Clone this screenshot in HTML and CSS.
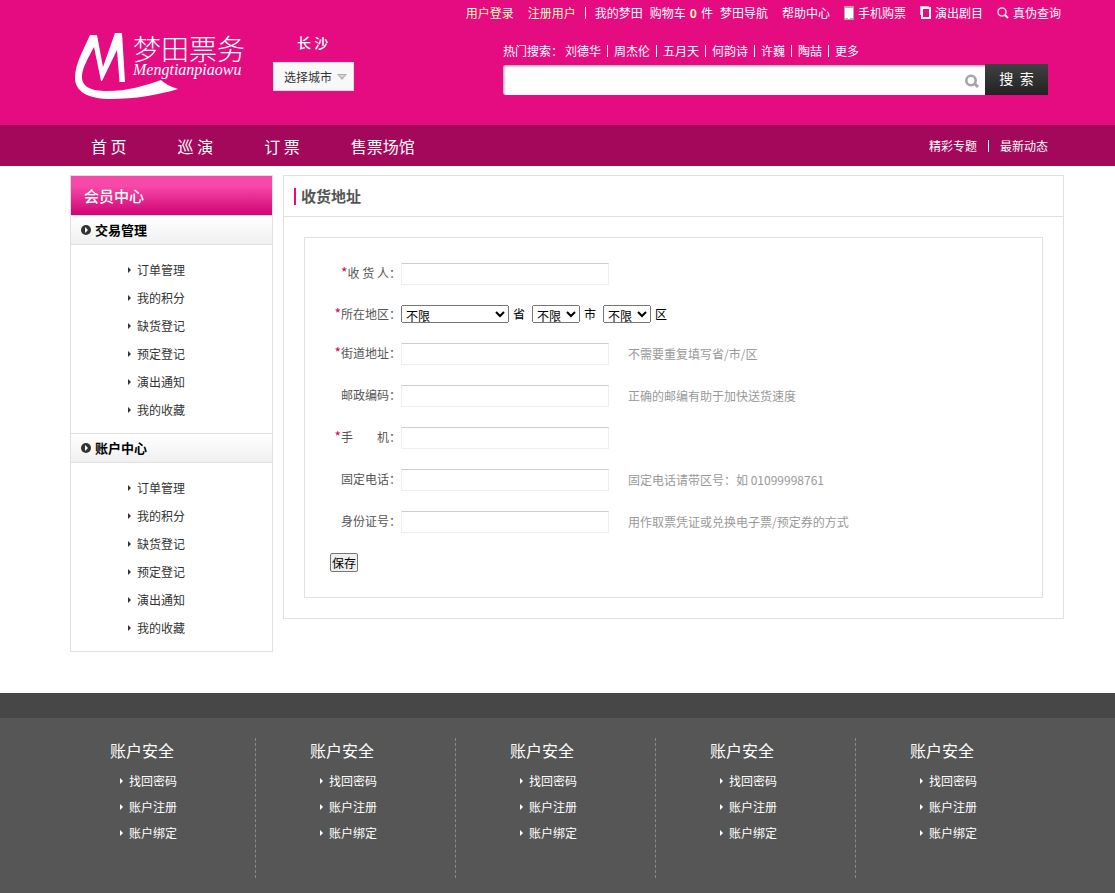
FILE: index.html
```html
<!DOCTYPE html>
<html lang="zh-CN">
<head>
<meta charset="utf-8">
<title>梦田票务 - 收货地址</title>
<link rel="stylesheet" href="styles.css">
</head>
<body>
<header class="header">
  <nav class="topnav">
    <a class="login" href="#">用户登录</a>
    <a class="login" href="#">注册用户</a>
    <i class="bar"></i>
    <a class="after-bar" href="#">我的梦田</a>
    <a class="near cart" href="#">购物车 <b>0</b> 件</a>
    <a class="near" href="#">梦田导航</a>
    <a href="#">帮助中心</a>
    <a class="with-icon" href="#"><svg width="10" height="14" viewBox="0 0 10 14"><rect x="0" y="0" width="10" height="14" rx="1" fill="#b9a3ae"/><rect x="1" y="2" width="8" height="10" fill="#fff"/><rect x="4" y="12" width="2" height="1" fill="#fff"/></svg>手机购票</a>
    <a class="with-icon" href="#"><svg width="11" height="14" viewBox="0 0 11 14"><path d="M0 1h9M1 0v9" stroke="#f9b8da" stroke-width="2" fill="none"/><rect x="2" y="2" width="8" height="10" fill="none" stroke="#fff" stroke-width="2"/></svg>演出剧目</a>
    <a class="with-icon" href="#"><svg width="12" height="14" viewBox="0 0 12 14"><circle cx="5" cy="6" r="4" fill="none" stroke="#ffc4e2" stroke-width="1.6"/><path d="M8 9l3 3" stroke="#fff" stroke-width="2"/></svg>真伪查询</a>
  </nav>
  <div class="masthead">
    <a class="logo" href="#">
      <svg class="mark" width="104" height="68" viewBox="0 0 104 68"><path d="M15 2H22L28 34L40 0H47L50 49H44.500L42 17L27 48H26L19 14C13 25 8 34 7 42C6 54 16 58 32 58C53 58 69 53 86 47C90 51 96 54 103 56C83 62 60 66 36 66C12 66 0 58 0 45C0 31 8 18 15 2Z" fill="#fff"/></svg>
      <span class="brand"><span class="brand-cn">梦田票务</span><span class="brand-en">Mengtianpiaowu</span></span>
    </a>
    <div class="city">
      <strong>长 沙</strong>
      <button type="button">选择城市<svg width="10" height="6" viewBox="0 0 10 6"><path d="M0 0H10L5 6Z" fill="#b0b0b0"/><path d="M2 1H8L5 4Z" fill="#d5d5d5"/></svg></button>
    </div>
    <div class="finder">
      <div class="hot">
        <span>热门搜索：</span><a href="#">刘德华</a><i class="bar"></i><a href="#">周杰伦</a><i class="bar"></i><a href="#">五月天</a><i class="bar"></i><a href="#">何韵诗</a><i class="bar"></i><a href="#">许巍</a><i class="bar"></i><a href="#">陶喆</a><i class="bar"></i><a href="#">更多</a>
      </div>
      <form class="search">
        <div class="search-box">
          <input type="text" aria-label="搜索">
          <svg width="14" height="14" viewBox="0 0 14 14"><circle cx="6" cy="6.500" r="4.700" fill="none" stroke="#a5a5a5" stroke-width="2.600"/><path d="M9 9l4 4" stroke="#a5a5a5" stroke-width="3"/></svg>
        </div>
        <button type="button">搜&nbsp; 索</button>
      </form>
    </div>
  </div>
</header>
<nav class="mainnav">
  <a href="#">首 页</a><a href="#">巡 演</a><a href="#">订 票</a><a href="#">售票场馆</a>
  <div class="extra"><a href="#">精彩专题</a><i class="bar"></i><a href="#">最新动态</a></div>
</nav>
<main class="content">
  <aside class="side">
    <h2>会员中心</h2>
    <section>
      <h3><svg width="10" height="10" viewBox="0 0 10 10"><circle cx="5" cy="5" r="5" fill="#333"/><path d="M4 2L7 5L4 8Z" fill="#fff"/></svg>交易管理</h3>
      <ul>
        <li><a href="#">订单管理</a></li><li><a href="#">我的积分</a></li><li><a href="#">缺货登记</a></li><li><a href="#">预定登记</a></li><li><a href="#">演出通知</a></li><li><a href="#">我的收藏</a></li>
      </ul>
    </section>
    <section>
      <h3><svg width="10" height="10" viewBox="0 0 10 10"><circle cx="5" cy="5" r="5" fill="#333"/><path d="M4 2L7 5L4 8Z" fill="#fff"/></svg>账户中心</h3>
      <ul>
        <li><a href="#">订单管理</a></li><li><a href="#">我的积分</a></li><li><a href="#">缺货登记</a></li><li><a href="#">预定登记</a></li><li><a href="#">演出通知</a></li><li><a href="#">我的收藏</a></li>
      </ul>
    </section>
  </aside>
  <section class="panel">
    <h1>收货地址</h1>
    <form class="address">
      <div class="row"><label for="name"><em>*</em>收 货 人：</label><input id="name" type="text"></div>
      <div class="row region"><label for="province"><em>*</em>所在地区：</label>
        <select id="province" class="wide"><option>不限</option></select><label class="unit" for="province">省</label>
        <select id="town"><option>不限</option></select><label class="unit" for="town">市</label>
        <select id="district"><option>不限</option></select><label class="unit" for="district">区</label></div>
      <div class="row"><label for="street"><em>*</em>街道地址：</label><input id="street" type="text"><span class="hint">不需要重复填写省/市/区</span></div>
      <div class="row"><label for="zip">邮政编码：</label><input id="zip" type="text"><span class="hint">正确的邮编有助于加快送货速度</span></div>
      <div class="row"><label for="mobile"><em>*</em>手&emsp;&emsp;机：</label><input id="mobile" type="text"></div>
      <div class="row"><label for="phone">固定电话：</label><input id="phone" type="text"><span class="hint">固定电话请带区号：如 01099998761</span></div>
      <div class="row"><label for="idno">身份证号：</label><input id="idno" type="text"><span class="hint">用作取票凭证或兑换电子票/预定券的方式</span></div>
      <button type="button" class="save">保存</button>
    </form>
  </section>
</main>
<footer class="footer">
  <div class="columns">
    <section><h4>账户安全</h4><ul><li><a href="#">找回密码</a></li><li><a href="#">账户注册</a></li><li><a href="#">账户绑定</a></li></ul></section>
    <section><h4>账户安全</h4><ul><li><a href="#">找回密码</a></li><li><a href="#">账户注册</a></li><li><a href="#">账户绑定</a></li></ul></section>
    <section><h4>账户安全</h4><ul><li><a href="#">找回密码</a></li><li><a href="#">账户注册</a></li><li><a href="#">账户绑定</a></li></ul></section>
    <section><h4>账户安全</h4><ul><li><a href="#">找回密码</a></li><li><a href="#">账户注册</a></li><li><a href="#">账户绑定</a></li></ul></section>
    <section><h4>账户安全</h4><ul><li><a href="#">找回密码</a></li><li><a href="#">账户注册</a></li><li><a href="#">账户绑定</a></li></ul></section>
  </div>
</footer>
</body>
</html>
```
FILE: styles.css
```css
* { box-sizing: border-box; }
body, h1, h2, h3, h4, ul { margin: 0; padding: 0; }
body { display: flex; flex-direction: column; min-height: 100vh; background: #fff; color: #333; font: 12px/18px "Noto Sans CJK SC", sans-serif; }
ul { list-style: none; }
a { color: inherit; text-decoration: none; white-space: nowrap; }
em { color: #e6004c; font-size: 14px; line-height: 12px; font-style: normal; }
svg { flex: none; display: block; }
input, select, button { margin: 0; font: inherit; }
.bar { flex: none; width: 1px; height: 12px; background: #fff; }

.header { height: 125px; background: #e50c81; color: #fff; }
.topnav { display: flex; justify-content: flex-end; align-items: center; height: 26px; padding-right: 54px; }
.topnav a { margin-left: 14px; }
.topnav .login { color: #ffffb4; }
.topnav .bar { margin-left: 9px; }
.topnav .after-bar { margin-left: 9px; }
.topnav .near { margin-left: 7px; }
.topnav .cart { display: flex; gap: 4px; }
.topnav b { color: #ffffb4; font-size: 12px; }
.topnav .with-icon { display: flex; align-items: center; gap: 4px; }

.masthead { display: flex; align-items: flex-start; padding: 7px 67px 0 75px; }
.logo { display: flex; width: 170px; }
.mark { margin-right: -46px; }
.brand { display: flex; flex-direction: column; }
.brand-cn { font-size: 28px; line-height: 30px; font-weight: 300; }
.brand-en { font: italic 16px/14px "Liberation Serif", serif; }
.city { display: flex; flex-direction: column; margin-left: 28px; }
.city strong { margin-left: 24px; font-size: 14px; line-height: 18px; font-weight: 500; }
.city button { display: flex; align-items: center; gap: 5px; height: 29px; margin-top: 11px; padding: 0 6px 0 10px; border: 1px solid #ddd; background: #f8f8f8; color: #333; white-space: nowrap; }
.finder { width: 545px; margin-left: auto; padding-top: 9px; }
.hot { display: flex; align-items: center; line-height: 18px; }
.hot span { margin-right: 2px; white-space: nowrap; }
.hot .bar { margin: 0 6px; }
.search { display: flex; align-items: flex-end; margin-top: 4px; }
.search-box { display: flex; flex: 1; align-items: center; height: 30px; padding-right: 6px; border: 1px solid #bbb; border-width: 1px 0 0 1px; border-radius: 3px 0 0 3px; background: #fff; box-shadow: inset 1px 1px 2px #ccc; }
.search input { flex: 1; min-width: 0; height: 24px; padding: 0 8px; border: 0; background: none; outline: 0; }
.search button { width: 63px; height: 31px; padding: 0 0 3px; border: 0; background: linear-gradient(#414141, #222); color: #fff; font-size: 14px; }

.mainnav { display: flex; align-items: center; gap: 51px; height: 41px; padding: 0 67px 0 91px; background: #a3085a; color: #fff; font-size: 16px; }
.extra { display: flex; align-items: center; gap: 11px; margin-left: auto; font-size: 12px; }

.content { display: flex; align-items: flex-start; gap: 10px; padding: 9px 51px 41px 70px; }
.side { width: 203px; border: 1px solid #e0e0e0; }
.side h2 { height: 40px; padding-left: 13px; border-bottom: 1px solid #e0e0e0; background: linear-gradient(#f649a9 25%, #cf0473); color: #fff; font-size: 15px; font-weight: 500; line-height: 39px; }
.side h3 { display: flex; align-items: center; gap: 4px; height: 29px; padding-left: 10px; border-bottom: 1px solid #e0e0e0; background: linear-gradient(#fff, #f0f0f0); color: #000; font-size: 13px; }
.side section + section { border-top: 1px solid #e0e0e0; }
.side ul { padding: 11px 0 9px 57px; color: #333; }
.side li { display: flex; align-items: center; gap: 6px; height: 28px; }
.side li::before, .footer li::before { content: ""; border: 3px solid transparent; border-left-color: currentColor; border-right-width: 0; }

.panel { flex: 1; min-width: 0; border: 1px solid #e0e0e0; }
.panel h1 { display: flex; align-items: center; height: 41px; padding-left: 10px; border-bottom: 1px solid #e0e0e0; color: #555; font-size: 15px; }
.panel h1::before { content: ""; width: 2px; height: 17px; margin-right: 5px; background: #e50c81; }
.address { display: flex; flex-direction: column; align-items: flex-start; gap: 20px; margin: 20px; padding: 25px; border: 1px solid #e0e0e0; color: #555; }
.row { display: flex; align-items: center; height: 22px; }
.row > label:first-child { width: 71px; padding-bottom: 2px; text-align: right; white-space: nowrap; }
.row input { width: 208px; height: 22px; border: 1px solid #eee; border-top-color: #ccc; }
.region { height: 18px; color: #555; }
.region > label:first-child { padding-bottom: 0; }
.region select { width: 48px; height: 18px; padding: 0; color: #000; line-height: 16px; }
.region .wide { width: 108px; }
.region .unit { margin: 0 7px 0 4px; color: #000; }
.hint { margin-left: 19px; color: #999; }
.save { width: 28px; height: 19px; padding: 0; border: 1px solid #767676; border-radius: 2px; background: #efefef; color: #000; line-height: 17px; white-space: nowrap; }

.footer { flex: 1; padding-bottom: 15px; border-top: 25px solid #474747; background: #565656; color: #fff; }
.columns { display: grid; grid-template-columns: repeat(5, 1fr); padding: 20px 59px 0 56px; }
.columns section { height: 140px; padding-left: 54px; border-right: 1px dashed #8a8a8a; }
.columns section:last-child { border-right: 0; }
.footer h4 { margin-bottom: 6px; font-size: 16px; font-weight: 400; line-height: 24px; }
.footer ul { padding-left: 10px; }
.footer li { display: flex; align-items: center; gap: 6px; height: 26px; }
```
